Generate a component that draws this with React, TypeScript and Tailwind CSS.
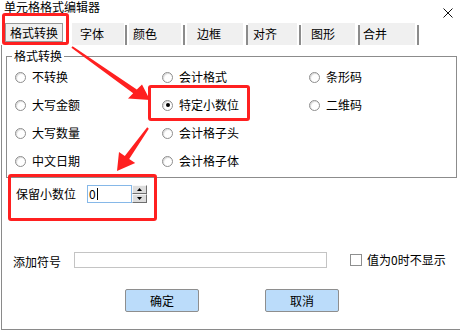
import React from "react";

const FONT = { fontFamily: '"Noto Sans CJK SC", "Noto Sans", sans-serif' };

function Radio({ label, checked = false }: { label: string; checked?: boolean }) {
  return (
    <div className="flex h-[28px] items-center gap-[6px]">
      <span className="flex h-[11px] w-[11px] items-center justify-center rounded-full border border-[#8e8e8e] bg-white shadow-[inset_1px_1px_1px_rgba(0,0,0,0.15)]">
        {checked && <span className="h-[4px] w-[4px] rounded-full bg-black" />}
      </span>
      <span className="leading-[12px]">{label}</span>
    </div>
  );
}

export default function App() {
  return (
    <div className="relative h-[333px] w-[460px] overflow-hidden bg-white text-[12px] text-black" style={FONT}>
      {/* title bar */}
      <div className="flex h-[23px] items-start justify-between">
        <div className="pl-[4px] pt-[1px] leading-[12px]">单元格格式编辑器</div>
        <svg className="mr-[7px] mt-[8px]" width="10" height="10" viewBox="0 0 10 10">
          <path d="M0.5 0.5 L9.5 9.5 M9.5 0.5 L0.5 9.5" stroke="#111" strokeWidth="1" fill="none" />
        </svg>
      </div>

      {/* tabs */}
      <div className="flex h-[22px] items-start">
        <div className="ml-[5px] flex h-[19px] w-[58px] items-center justify-center border border-[#9a9a9a] bg-[#f0f0f0] leading-[12px]">
          格式转换
        </div>
        <div className="ml-[9px] flex h-[22px] w-[52px] items-center bg-[#f0f0f0] pl-[8px] leading-[12px]">字体</div>
        <div className="ml-[1px] mt-[2px] h-[20px] w-[2px] bg-[#8c8c8c]" />
        <div className="ml-[2px] flex h-[22px] w-[52px] items-center bg-[#f0f0f0] pl-[4px] leading-[12px]">颜色</div>
        <div className="ml-[2px] mt-[2px] h-[20px] w-[2px] bg-[#8c8c8c]" />
        <div className="ml-[2px] flex h-[22px] w-[56px] items-center bg-[#f0f0f0] pl-[10px] leading-[12px]">边框</div>
        <div className="ml-[3px] mt-[2px] h-[20px] w-[2px] bg-[#8c8c8c]" />
        <div className="flex h-[22px] w-[49px] items-center bg-[#f0f0f0] pl-[5px] leading-[12px]">对齐</div>
        <div className="ml-[2px] mt-[2px] h-[20px] w-[2px] bg-[#8c8c8c]" />
        <div className="ml-[1px] flex h-[22px] w-[53px] items-center bg-[#f0f0f0] pl-[9px] leading-[12px]">图形</div>
        <div className="ml-[3px] mt-[2px] h-[20px] w-[2px] bg-[#8c8c8c]" />
        <div className="flex h-[22px] w-[55px] items-center bg-[#f0f0f0] pl-[3px] leading-[12px]">合并</div>
        <div className="ml-[2px] mt-[2px] h-[20px] w-[2px] bg-[#8c8c8c]" />
      </div>

      {/* panel */}
      <div className="ml-[1px] box-border flex h-[285px] w-[470px] flex-col border-b border-l border-[#8a8a8a]">
        <fieldset className="ml-[4px] mt-[5px] w-[451px] border border-[#8c8c8c] pb-[2px] pt-[1px]">
          <legend className="ml-[5px] px-[2px] leading-[12px]">格式转换</legend>
          <div className="grid grid-cols-[147px_147px_147px] pl-[8px]">
            <Radio label="不转换" />
            <Radio label="会计格式" />
            <Radio label="条形码" />
            <Radio label="大写金额" />
            <Radio label="特定小数位" checked />
            <Radio label="二维码" />
            <Radio label="大写数量" />
            <Radio label="会计格子头" />
            <div />
            <Radio label="中文日期" />
            <Radio label="会计格子体" />
            <div />
          </div>
        </fieldset>

        {/* 保留小数位 */}
        <div className="ml-[14px] mt-[7px] flex h-[18px] items-center">
          <span className="leading-[12px]">保留小数位</span>
          <div className="ml-[11px] flex h-[18px] w-[45px] items-center border border-[#86b8e8] bg-white pl-[1px] leading-[12px]">
            <span>0</span>
            <span className="ml-[1px] h-[12px] w-[1px] bg-black" />
          </div>
          <div className="flex h-[18px] w-[15px] flex-col">
            <div className="flex h-[9px] items-center justify-center border-b border-r border-b-[#6e6e6e] border-r-[#6e6e6e] border-l border-t border-l-[#f8f8f8] border-t-[#f8f8f8] bg-[#dcdcdc]">
              <svg width="5" height="3" viewBox="0 0 5 3"><path d="M2.5 0 L5 3 L0 3 Z" fill="#000" /></svg>
            </div>
            <div className="flex h-[9px] items-center justify-center border-b border-r border-b-[#6e6e6e] border-r-[#6e6e6e] border-l border-t border-l-[#f8f8f8] border-t-[#f8f8f8] bg-[#dcdcdc]">
              <svg width="5" height="3" viewBox="0 0 5 3"><path d="M0 0 L5 0 L2.5 3 Z" fill="#000" /></svg>
            </div>
          </div>
        </div>

        {/* 添加符号 */}
        <div className="ml-[11px] mt-[49px] flex h-[16px] items-center">
          <span className="mt-[3px] leading-[12px]">添加符号</span>
          <div className="ml-[13px] h-[16px] w-[253px] border border-[#c4c4c4] bg-white" />
          <span className="ml-[23px] h-[12px] w-[12px] border border-[#8e8f8f] bg-white" />
          <span className="ml-[5px] leading-[12px]">值为0时不显示</span>
        </div>

        {/* buttons */}
        <div className="ml-[123px] mt-[21px] flex gap-[66px]">
          <button className="flex h-[23px] w-[74px] items-center justify-center rounded-[2px] border border-[#8e8e8e] bg-[#bbdcfa] leading-[12px]">
            确定
          </button>
          <button className="flex h-[23px] w-[74px] items-center justify-center rounded-[2px] border border-[#8e8e8e] bg-[#bbdcfa] leading-[12px]">
            取消
          </button>
        </div>
      </div>

      {/* annotation overlays */}
      <div className="pointer-events-none absolute left-[2px] top-[13px] h-[32px] w-[67px] rounded-[3px] border-[3px] border-[#ff2020]" />
      <div className="pointer-events-none absolute left-[148px] top-[85px] h-[36px] w-[102px] rounded-[3px] border-[3px] border-[#ff2020]" />
      <div className="pointer-events-none absolute left-[8px] top-[174px] h-[47px] w-[149px] rounded-[3px] border-[3px] border-[#ff2020]" />
      <svg className="pointer-events-none absolute left-0 top-0" width="460" height="333" viewBox="0 0 460 333">
        <path d="M71.4 47.8 L72.6 46.2 L136.8 89.6 L142 84.5 L150 100 L128 98.5 L133.2 93.3 Z" fill="#ff2020" />
        <path d="M147.2 127.3 L148.8 128.7 L129.2 158.9 L135.2 163 L117 171 L119 152 L124.8 156.1 Z" fill="#ff2020" />
      </svg>
    </div>
  );
}
